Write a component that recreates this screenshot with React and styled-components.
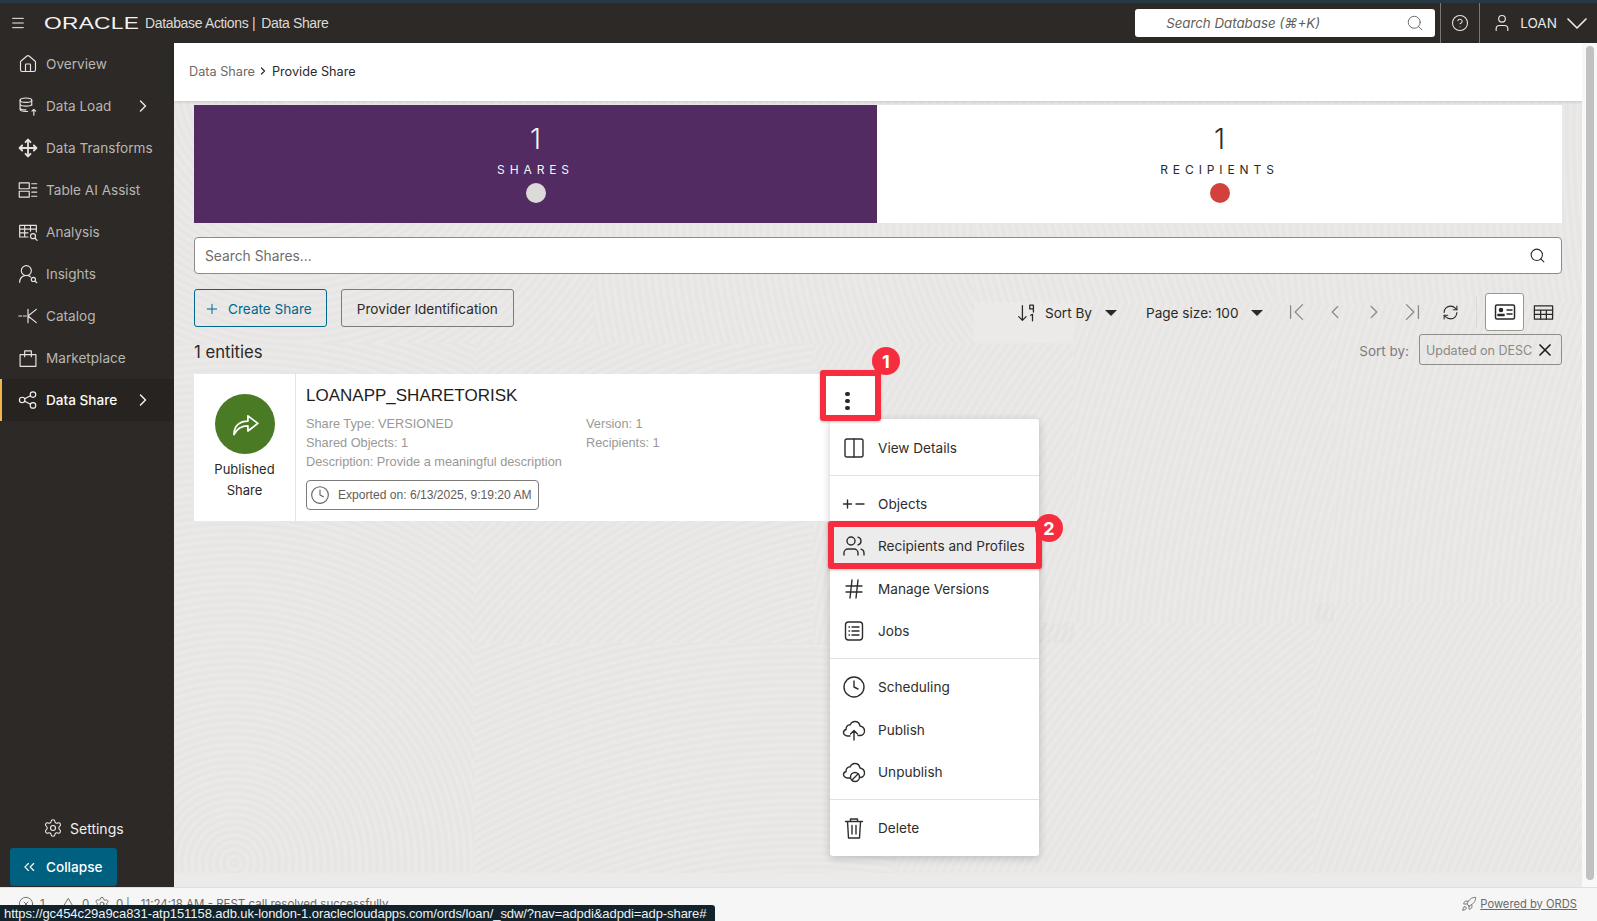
import React from "react";
import styled, {createGlobalStyle} from "styled-components";
import {
    ChevronLeft, ChevronRight, CircleHelp, CircleX, Clock, Columns2, Hash, Home,
    Menu as MenuIcon, Move, Plus, RefreshCw, Rocket, Search, Settings, User, Users, X
} from "lucide-react";

const GlobalStyle = createGlobalStyle`
  html, body {
    margin: 0;
    padding: 0;
    height: 100%;
    overflow: hidden;
    background: #ebeae8;
    font-family: Inter, "Liberation Sans", sans-serif;
  }

  * {
    box-sizing: border-box;
  }
`

// swirl patches of the page background: centre of the rings, then the patch rectangle
const swirls = [
    [120, 40, 0, 0, 420, 300],
    [520, 180, 420, 0, 380, 300],
    [1000, -40, 800, 0, 300, 260],
    [1290, 90, 1100, 0, 308, 260],
    [60, 520, 0, 300, 300, 530],
    [420, 620, 300, 300, 340, 300],
    [760, 430, 640, 300, 260, 300],
    [330, 780, 300, 600, 420, 230],
    [1010, 420, 900, 260, 260, 320],
    [1340, 420, 1160, 260, 248, 300],
    [960, 720, 720, 580, 420, 250],
    [1320, 760, 1140, 560, 268, 270],
];

const swirlImages = swirls.map(([cx, cy]) =>
    `repeating-radial-gradient(circle at ${cx}px ${cy}px, rgba(0,0,0,0) 0, rgba(0,0,0,.022) 3px, rgba(0,0,0,0) 7px)`
).join(",");

const Page = styled.div`
  position: relative;
  width: 1597px;
  height: 921px;
  display: flex;
  flex-direction: column;
  overflow: hidden;
`

const TopStrip = styled.div`
  height: 3px;
  flex: none;
  background: #263843;
`

const Header = styled.header`
  height: 40px;
  flex: none;
  display: flex;
  align-items: center;
  background: #2c2926;
  color: #dcdad7;
`

const Burger = styled.div`
  width: 44px;
  display: flex;
  justify-content: center;
  padding-right: 8px;
  color: #f0efed;
`

const LogoBox = styled.div`
  width: 101px;
  height: 20px;
  flex: none;
`

const Logo = styled.span`
  display: inline-block;
  font: 16px/20px "Liberation Sans", sans-serif;
  letter-spacing: 0.2px;
  color: #f4f3f1;
  transform: scaleX(1.42);
  transform-origin: left center;
`

const AppTitle = styled.div`
  font: 14px "Liberation Sans", sans-serif;
  letter-spacing: -0.35px;
  display: flex;
  gap: 6px;
`

const HeaderSpacer = styled.div`
  flex: 1;
`

const GlobalSearch = styled.div`
  width: 300px;
  height: 28px;
  background: #fff;
  border-radius: 3px;
  display: flex;
  align-items: center;
  justify-content: space-between;
  padding: 0 11px 0 31px;
  font-size: 13.3px;
  font-style: italic;
  color: #5f5d5a;
`

const HeaderCell = styled.div`
  height: 40px;
  margin-left: ${p => p.$ml || 0}px;
  padding: ${p => p.$pad};
  border-left: 1px solid #7b7773;
  display: flex;
  align-items: center;
  gap: 8px;
  font-size: 13.6px;
  color: #e9e7e4;
`

const Body = styled.div`
  flex: 1;
  display: flex;
  min-height: 0;
`

const Sidebar = styled.nav`
  width: 174px;
  flex: none;
  display: flex;
  flex-direction: column;
  background: #2c2926;
  padding-bottom: 1px;
`

const NavItem = styled.div`
  height: 42px;
  flex: none;
  display: flex;
  align-items: center;
  gap: 8px;
  padding: 0 0 1px 16px;
  font-size: 13.6px;
  font-weight: ${p => p.$active ? 500 : 400};
  color: ${p => p.$active ? "#fbfaf9" : "#b8b6b3"};
  background: ${p => p.$active ? "#262320" : "transparent"};
  border-left: 2px solid ${p => p.$active ? "#efb54a" : "transparent"};

  svg {
    color: ${p => p.$active ? "#f2f1ef" : "#e6e4e1"};
    flex: none;
  }
`

const NavLabel = styled.span`
  flex: 1;
`

const NavChevron = styled.span`
  width: 20px;
  margin-right: 21px;
  display: flex;
  justify-content: center;
`

const SettingsRow = styled.div`
  margin-top: auto;
  height: 38px;
  display: flex;
  align-items: center;
  gap: 7px;
  padding: 0 0 2px 43px;
  font-size: 14px;
  color: #f0efed;
`

const CollapseButton = styled.div`
  width: 107px;
  height: 38px;
  margin-left: 10px;
  border-radius: 3px;
  background: #00607f;
  color: #fff;
  font-size: 13.6px;
  font-weight: 500;
  display: flex;
  align-items: center;
  gap: 10px;
  padding: 0 0 1px 12px;
`

const Main = styled.main`
  flex: 1;
  min-width: 0;
  display: flex;
  flex-direction: column;
  background-color: #ebeae8;
  background-image: ${swirlImages};
  background-repeat: no-repeat;
  background-size: ${swirls.map(s => `${s[4]}px ${s[5]}px`).join(",")};
  background-position: ${swirls.map(s => `${s[2]}px ${s[3]}px`).join(",")};
`

const Breadcrumb = styled.div`
  height: 58px;
  flex: none;
  display: flex;
  align-items: center;
  gap: 2.5px;
  padding: 0 0 2px 15px;
  background: #fff;
  box-shadow: 0 1px 3px rgba(0, 0, 0, .14);
  font-size: 12.7px;
  color: #2b2927;
`

const CrumbLink = styled.span`
  color: #6c6a67;
`

const Content = styled.div`
  flex: 1;
  padding: 4px 20px 0 20px;
`

const Stats = styled.section`
  display: flex;
  height: 118px;
`

const StatTile = styled.div`
  flex: ${p => p.$grow};
  display: flex;
  flex-direction: column;
  align-items: center;
  padding-top: 17px;
  background: ${p => p.$active ? "#512b62" : "#fff"};
  color: ${p => p.$active ? "#f6f4f7" : "#2b2927"};
`

const StatValue = styled.div`
  font-size: 28px;
  line-height: 34px;
  font-weight: 300;
`

const StatLabel = styled.div`
  margin-top: 6px;
  font-size: 12px;
  line-height: 15px;
  letter-spacing: 4.9px;
`

const StatDot = styled.div`
  width: 20px;
  height: 20px;
  margin-top: 6px;
  border-radius: 50%;
  background: ${p => p.$color};
`

const SearchBar = styled.div`
  height: 37px;
  margin-top: 14px;
  background: #fff;
  border: 1px solid #8d8b88;
  border-radius: 4px;
  display: flex;
  align-items: center;
  justify-content: space-between;
  padding: 0 15px 0 10px;
  font-size: 13.8px;
  color: #6f6d6a;
`

const Toolbar = styled.div`
  height: 42px;
  margin-top: 15px;
  display: flex;
  justify-content: space-between;
`

const ButtonGroup = styled.div`
  display: flex;
  gap: 14px;
`

const Button = styled.div`
  height: 38px;
  padding: ${p => p.$primary ? "1px 14px 0 9px" : "1px 15px 0"};
  display: flex;
  align-items: center;
  gap: 8px;
  border: 1px solid ${p => p.$primary ? "#00688c" : "#7d7b78"};
  border-radius: 3px;
  font-size: 13.6px;
  color: ${p => p.$primary ? "#00688c" : "#2b2927"};
`

const Pager = styled.div`
  display: flex;
  align-items: center;
  height: 38px;
  margin-top: 4px;
  font-size: 13.6px;
  color: #2b2927;
`

const Dropdown = styled.div`
  display: flex;
  align-items: center;
  padding-top: 1px;
  gap: ${p => p.$gap}px;
  margin-right: ${p => p.$mr}px;
`

const Caret = styled.span`
  width: 0;
  height: 0;
  margin-left: ${p => p.$ml}px;
  border-left: 6px solid transparent;
  border-right: 6px solid transparent;
  border-top: 6px solid #2b2927;
`

const PagerButton = styled.div`
  width: ${p => p.$w || 38.5}px;
  height: 38px;
  display: flex;
  align-items: center;
  justify-content: center;
  color: ${p => p.$dim ? "#8b8986" : "#2b2927"};
  background: ${p => p.$selected ? "#fff" : "transparent"};
  border: ${p => p.$selected ? "1px solid #9a9895" : "none"};
  border-radius: 3px;
`

const PagerDivider = styled.div`
  width: 1px;
  height: 32px;
  margin: 0 8px 0 6px;
  background: #dcdad7;
`

const ResultRow = styled.div`
  height: 31px;
  margin-top: 3px;
  display: flex;
  align-items: center;
  justify-content: space-between;
`

const Entities = styled.div`
  padding-top: 4px;
  font-size: 16.7px;
  color: #2b2927;
`

const SortInfo = styled.div`
  display: flex;
  align-items: center;
  gap: 10px;
  font-size: 13.5px;
  color: #7d7b78;
`

const SortLabel = styled.span`
  padding-top: 3px;
`

const SortChip = styled.div`
  width: 143px;
  height: 31px;
  display: flex;
  align-items: center;
  justify-content: space-between;
  padding: 1px 6px 0;
  border: 1px solid #8f8d8a;
  border-radius: 3px;
  font-size: 12.5px;
  color: #8a8886;

  svg {
    color: #1f1d1b;
    flex: none;
  }
`

const ShareCard = styled.article`
  width: 681px;
  height: 147px;
  margin-top: 9px;
  display: flex;
  background: #fff;
`

const CardStatus = styled.div`
  width: 102px;
  flex: none;
  padding-top: 20px;
  display: flex;
  flex-direction: column;
  align-items: center;
  border-right: 1px solid #e6e4e2;
  font-size: 13px;
  line-height: 21px;
  color: #2b2927;
  text-align: center;
`

const StatusCircle = styled.div`
  width: 60px;
  height: 60px;
  margin-bottom: 5px;
  border-radius: 50%;
  background: #4a7a24;
  color: #fff;
  display: flex;
  align-items: center;
  justify-content: center;
`

const CardBody = styled.div`
  flex: 1;
  padding: 11px 0 0 10px;
  font-family: "Liberation Sans", sans-serif;
`

const CardTitle = styled.h2`
  margin: 0;
  font-size: 17px;
  font-weight: 400;
  line-height: 22px;
  color: #1f1d1b;
`

const MetaGrid = styled.div`
  margin-top: 7px;
  display: grid;
  grid-template-columns: 280px 1fr;
  font-size: 12.75px;
  line-height: 19px;
  color: #9a9895;
`

const MetaWide = styled.div`
  grid-column: 1 / 3;
`

const ExportChip = styled.div`
  width: 233px;
  height: 30px;
  margin-top: 9px;
  display: flex;
  align-items: center;
  gap: 8px;
  padding-left: 3px;
  border: 1px solid #7d7b78;
  border-radius: 4px;
  font-size: 12.1px;
  white-space: nowrap;
  color: #5f5d5a;
`

const Kebab = styled.div`
  width: 55px;
  flex: none;
  padding-top: 18px;
  display: flex;
  flex-direction: column;
  align-items: center;
  gap: 2.4px;

  span {
    width: 4.4px;
    height: 4.4px;
    border-radius: 50%;
    background: #2b2927;
  }
`

const Scrollbar = styled.div`
  width: 15px;
  flex: none;
  padding: 3px 3px 7px 4px;
  background: #f8f8f8;
`

const ScrollThumb = styled.div`
  height: 100%;
  width: 8px;
  border-radius: 4px;
  background: #c1c1c1;
`

const Footer = styled.footer`
  height: 34px;
  flex: none;
  display: flex;
  align-items: center;
  justify-content: space-between;
  padding: 0 20px 2px 18px;
  background: #f6f6f6;
  border-top: 1px solid #e0dfdd;
  font-size: 11.5px;
  color: #6b6967;
`

const FooterStatus = styled.div`
  display: flex;
  align-items: center;
`

const StatusCount = styled.div`
  width: ${p => p.$w}px;
  display: flex;
  align-items: center;
  gap: 6px;
`

const StatusMessage = styled.span`
  margin-left: 11px;
`

const PoweredBy = styled.div`
  display: flex;
  align-items: center;
  gap: 3px;
  font-size: 11.2px;
  text-decoration: underline;
`

const PopupMenu = styled.div`
  position: absolute;
  top: 419px;
  left: 830px;
  width: 209px;
  padding-bottom: 1px;
  background: #fff;
  border-radius: 3px;
  box-shadow: 0 2px 8px rgba(0, 0, 0, .2);
`

const MenuGroup = styled.div`
  padding: ${p => p.$first ? "8px" : "6.5px"} 0 6px;
  border-top: ${p => p.$first ? "none" : "1px solid #e3e2e0"};
`

const MenuItem = styled.div`
  height: 42.4px;
  display: flex;
  align-items: center;
  gap: 12px;
  padding-left: 12px;
  font-size: 13.6px;
  color: #2f2d2b;
  background: ${p => p.$hover ? "#ececec" : "transparent"};

  svg {
    flex: none;
  }
`

const Callout = styled.div`
  position: absolute;
  top: ${p => p.$top}px;
  left: ${p => p.$left}px;
  width: ${p => p.$w}px;
  height: ${p => p.$h}px;
  border: 6px solid #f52d3e;
  border-radius: 3px;
  box-shadow: 0 1px 3px rgba(0, 0, 0, .25);
`

const CalloutBadge = styled.div`
  position: absolute;
  top: ${p => p.$top}px;
  left: ${p => p.$left}px;
  width: 28px;
  height: 28px;
  border-radius: 50%;
  background: #f52d3e;
  color: #fff;
  font-size: 18px;
  font-weight: 700;
  display: flex;
  align-items: center;
  justify-content: center;
`

const UrlTip = styled.div`
  position: absolute;
  left: 0;
  bottom: 0;
  height: 16px;
  width: 715px;
  padding-left: 4px;
  background: #13232c;
  border-top-right-radius: 3px;
  color: #eef2f4;
  font: 13px/17px "Liberation Sans", sans-serif;
  letter-spacing: -0.07px;
  white-space: nowrap;
`

// drawn by hand, the icon packages have nothing close to these
const Svg = ({size = 20, sw = 1.4, children}) => (
    <svg width={size} height={size} viewBox="0 0 24 24" fill="none" stroke="currentColor"
         strokeWidth={sw} strokeLinecap="round" strokeLinejoin="round">
        {children}
    </svg>
);

const DataLoadIcon = () => (
    <Svg>
        <ellipse cx="9.5" cy="5" rx="7" ry="2.6"/>
        <path d="M2.5 5v11c0 1.4 3 2.6 7 2.6h2M2.5 9.5c0 1.4 3 2.6 7 2.6s7-1.2 7-2.6M2.5 14c0 1.4 3 2.6 7 2.6M16.5 5v6"/>
        <path d="M19 23v-7M16.8 18.2 19 16l2.2 2.2"/>
    </Svg>
);

const TableAssistIcon = () => (
    <Svg>
        <rect x="1.5" y="3.5" width="12" height="7"/>
        <rect x="1.5" y="13.5" width="12" height="7"/>
        <path d="M16.5 4.5h6M16.5 9.5h6M16.5 14.5h6M16.5 19.5h6"/>
    </Svg>
);

const AnalysisIcon = () => (
    <Svg>
        <path d="M12 18H2V4h20v8M2 8.5h20M2 13h10M8 4v14M15 4v7"/>
        <circle cx="18" cy="17" r="3"/>
        <path d="m20.5 19.5 2.5 2.5"/>
    </Svg>
);

const InsightsIcon = () => (
    <Svg>
        <circle cx="10" cy="8" r="6"/>
        <path d="M2 22c0-4 2.5-7 6-8M12.5 14c1 .3 1.8.8 2.5 1.5"/>
        <circle cx="18.5" cy="18.5" r="2.5"/>
        <path d="m20.5 20.5 2 2"/>
    </Svg>
);

const CatalogIcon = () => (
    <Svg>
        <path d="M1 12h3.5M6.5 12h3.5M12 4v16M22 4l-10 8 10 8"/>
    </Svg>
);

const MarketIcon = () => (
    <Svg>
        <rect x="2.5" y="8" width="19" height="14"/>
        <path d="M8 8V3.5h8V8M8 8v2.5M16 8v2.5"/>
    </Svg>
);

const ShareNodesIcon = () => (
    <Svg>
        <circle cx="5" cy="12" r="3.3"/>
        <circle cx="18" cy="5.5" r="3.3"/>
        <circle cx="18" cy="18.5" r="3.3"/>
        <path d="m8 10.5 7-3.5M8 13.5l7 3.5"/>
    </Svg>
);

const CollapseChevrons = () => (
    <Svg size={14} sw={2}>
        <path d="M11 6l-6 6 6 6M20 6l-6 6 6 6"/>
    </Svg>
);

const WideChevron = () => (
    <Svg size={24} sw={1.7}>
        <path d="M3 8l9 9 9-9"/>
    </Svg>
);

const SortIcon = () => (
    <Svg size={22}>
        <path d="M7 4v16M3 16l4 4 4-4"/>
        <rect x="15" y="3.5" width="4" height="4"/>
        <path d="M19 7.5V11M16 14.5l2-1v7"/>
    </Svg>
);

const FirstIcon = () => (
    <Svg size={22}>
        <path d="M5 5v14M18 4l-8 8 8 8"/>
    </Svg>
);

const LastIcon = () => (
    <Svg size={22}>
        <path d="M19 5v14M6 4l8 8-8 8"/>
    </Svg>
);

const CardViewIcon = () => (
    <Svg size={24} sw={1.5}>
        <rect x="2.5" y="5" width="19" height="14" rx="1.5"/>
        <circle cx="8" cy="10" r="1.5" fill="currentColor"/>
        <path d="M5 15.5h6v-1H5zM14 10h5M14 14h5" fill="currentColor"/>
    </Svg>
);

const TableViewIcon = () => (
    <Svg size={23} sw={1.3}>
        <rect x="2.5" y="5" width="19" height="14"/>
        <path d="M2.5 9.5h19M2.5 14h19M9 9.5V19M15 9.5V19"/>
    </Svg>
);

const ReplyIcon = () => (
    <Svg size={28} sw={1.5}>
        <path d="M2.5 21C2.5 13 8 9.5 14.5 9.5V5L23 11.5 14.5 18v-4.5c-6 0-9.5 2.5-12 7.5Z"/>
    </Svg>
);

const PlusMinusIcon = () => (
    <Svg size={24}>
        <path d="M1.5 12h8M5.5 8v8M14 12h8"/>
    </Svg>
);

const JobsIcon = () => (
    <Svg size={24}>
        <rect x="3.5" y="3" width="17" height="18" rx="3"/>
        <path d="M10 8h7M10 12h7M10 16h7M7 8h.5M7 12h.5M7 16h.5"/>
    </Svg>
);

const CloudArrowIcon = () => (
    <Svg size={24}>
        <path d="M8 18H5.5C3 18 1.5 16 1.5 14.5S2.5 12 4 11.5C4 8 6.5 6.5 8 7c1-2 3-3.5 5-3.5 2.5 0 4.5 2 5 4.5 2.5.5 4.5 2.5 4.5 5s-2 4.5-4.5 4.5h-2"/>
        <path d="M12 22v-9M8.5 16l3.5-3.5 3.5 3.5"/>
    </Svg>
);

const CloudBanIcon = () => (
    <Svg size={24}>
        <path d="M8 18H5.5C3 18 1.5 16 1.5 14.5S2.5 12 4 11.5C4 8 6.5 6.5 8 7c1-2 3-3.5 5-3.5 2.5 0 4.5 2 5 4.5 2.5.5 4.5 2.5 4.5 5s-2 4.5-4.5 4.5"/>
        <circle cx="13" cy="17" r="4.5"/>
        <path d="m10 20 6-6"/>
    </Svg>
);

const TrashIcon = () => (
    <Svg size={24}>
        <path d="M3.5 5.5h17M8.5 5.5V3h7v2.5M5.5 5.5 6.5 22h11l1-16.5M10 9.5V18M14 9.5V18"/>
    </Svg>
);

const TriangleSmall = () => (
    <Svg size={16}>
        <path d="M12 4 2.5 20h19Z"/>
    </Svg>
);

const navItems = [
    {label: "Overview", icon: <Home size={20} strokeWidth={1.4}/>},
    {label: "Data Load", icon: <DataLoadIcon/>, more: true},
    {label: "Data Transforms", icon: <Move size={20} strokeWidth={2.2}/>},
    {label: "Table AI Assist", icon: <TableAssistIcon/>},
    {label: "Analysis", icon: <AnalysisIcon/>},
    {label: "Insights", icon: <InsightsIcon/>},
    {label: "Catalog", icon: <CatalogIcon/>},
    {label: "Marketplace", icon: <MarketIcon/>},
    {label: "Data Share", icon: <ShareNodesIcon/>, more: true, active: true},
];

const menuGroups = [
    [{label: "View Details", icon: <Columns2 size={24} strokeWidth={1.4}/>}],
    [
        {label: "Objects", icon: <PlusMinusIcon/>},
        {label: "Recipients and Profiles", icon: <Users size={24} strokeWidth={1.4}/>, hover: true},
        {label: "Manage Versions", icon: <Hash size={24} strokeWidth={1.4}/>},
        {label: "Jobs", icon: <JobsIcon/>},
    ],
    [
        {label: "Scheduling", icon: <Clock size={24} strokeWidth={1.4}/>},
        {label: "Publish", icon: <CloudArrowIcon/>},
        {label: "Unpublish", icon: <CloudBanIcon/>},
    ],
    [{label: "Delete", icon: <TrashIcon/>}],
];

export default function App() {
    return (
        <Page>
            <GlobalStyle/>
            <TopStrip/>
            <Header>
                <Burger><MenuIcon size={16} strokeWidth={1.5}/></Burger>
                <LogoBox><Logo>ORACLE</Logo></LogoBox>
                <AppTitle><span>Database Actions |</span><span>Data Share</span></AppTitle>
                <HeaderSpacer/>
                <GlobalSearch>
                    Search Database (⌘+K)
                    <Search size={18} strokeWidth={1.2}/>
                </GlobalSearch>
                <HeaderCell $ml={5} $pad="0 10px"><CircleHelp size={18} strokeWidth={1.4}/></HeaderCell>
                <HeaderCell $pad="0 8px 0 12px">
                    <User size={20} strokeWidth={1.4}/>
                    LOAN
                    <WideChevron/>
                </HeaderCell>
            </Header>
            <Body>
                <Sidebar>
                    {navItems.map(item => (
                        <NavItem key={item.label} $active={item.active}>
                            {item.icon}
                            <NavLabel>{item.label}</NavLabel>
                            {item.more && <NavChevron><ChevronRight size={20} strokeWidth={1.8}/></NavChevron>}
                        </NavItem>
                    ))}
                    <SettingsRow><Settings size={20} strokeWidth={1.3}/>Settings</SettingsRow>
                    <CollapseButton>
                        <CollapseChevrons/>
                        Collapse
                    </CollapseButton>
                </Sidebar>
                <Main>
                    <Breadcrumb>
                        <CrumbLink>Data Share</CrumbLink>
                        <ChevronRight size={12} strokeWidth={2.4}/>
                        <span>Provide Share</span>
                    </Breadcrumb>
                    <Content>
                        <Stats>
                            <StatTile $active $grow="683">
                                <StatValue>1</StatValue>
                                <StatLabel>SHARES</StatLabel>
                                <StatDot $color="#dcdad8"/>
                            </StatTile>
                            <StatTile $grow="685">
                                <StatValue>1</StatValue>
                                <StatLabel>RECIPIENTS</StatLabel>
                                <StatDot $color="#d2413c"/>
                            </StatTile>
                        </Stats>
                        <SearchBar>
                            Search Shares...
                            <Search size={17} strokeWidth={1.5} color="#2b2927"/>
                        </SearchBar>
                        <Toolbar>
                            <ButtonGroup>
                                <Button $primary><Plus size={16} strokeWidth={1.5}/>Create Share</Button>
                                <Button>Provider Identification</Button>
                            </ButtonGroup>
                            <Pager>
                                <Dropdown $gap={7} $mr={29}>
                                    <SortIcon/>Sort By<Caret $ml={6}/>
                                </Dropdown>
                                <Dropdown $gap={0} $mr={15}>
                                    Page size: 100<Caret $ml={12}/>
                                </Dropdown>
                                <PagerButton $dim><FirstIcon/></PagerButton>
                                <PagerButton $dim><ChevronLeft size={22} strokeWidth={1.3}/></PagerButton>
                                <PagerButton $dim><ChevronRight size={22} strokeWidth={1.3}/></PagerButton>
                                <PagerButton $dim><LastIcon/></PagerButton>
                                <PagerButton><RefreshCw size={17} strokeWidth={1.5}/></PagerButton>
                                <PagerDivider/>
                                <PagerButton $selected $w={39}><CardViewIcon/></PagerButton>
                                <PagerButton $w={38}><TableViewIcon/></PagerButton>
                            </Pager>
                        </Toolbar>
                        <ResultRow>
                            <Entities>1 entities</Entities>
                            <SortInfo>
                                <SortLabel>Sort by:</SortLabel>
                                <SortChip>Updated on DESC<X size={20} strokeWidth={2}/></SortChip>
                            </SortInfo>
                        </ResultRow>
                        <ShareCard>
                            <CardStatus>
                                <StatusCircle><ReplyIcon/></StatusCircle>
                                Published<br/>Share
                            </CardStatus>
                            <CardBody>
                                <CardTitle>LOANAPP_SHARETORISK</CardTitle>
                                <MetaGrid>
                                    <div>Share Type: VERSIONED</div>
                                    <div>Version: 1</div>
                                    <div>Shared Objects: 1</div>
                                    <div>Recipients: 1</div>
                                    <MetaWide>Description: Provide a meaningful description</MetaWide>
                                </MetaGrid>
                                <ExportChip>
                                    <Clock size={20} strokeWidth={1.3}/>
                                    Exported on: 6/13/2025, 9:19:20 AM
                                </ExportChip>
                            </CardBody>
                            <Kebab><span/><span/><span/></Kebab>
                        </ShareCard>
                    </Content>
                </Main>
                <Scrollbar><ScrollThumb/></Scrollbar>
            </Body>
            <Footer>
                <FooterStatus>
                    <StatusCount $w={42}><CircleX size={16} strokeWidth={1.4}/>1</StatusCount>
                    <StatusCount $w={34}><TriangleSmall/>0</StatusCount>
                    <StatusCount $w={32}><Settings size={16} strokeWidth={1.4}/>0</StatusCount>
                    |
                    <StatusMessage>11:24:18 AM - REST call resolved successfully</StatusMessage>
                </FooterStatus>
                <PoweredBy><Rocket size={16} strokeWidth={1.3}/>Powered by ORDS</PoweredBy>
            </Footer>
            <PopupMenu>
                {menuGroups.map((group, i) => (
                    <MenuGroup key={i} $first={i === 0}>
                        {group.map(item => (
                            <MenuItem key={item.label} $hover={item.hover}>{item.icon}{item.label}</MenuItem>
                        ))}
                    </MenuGroup>
                ))}
            </PopupMenu>
            <Callout $top={370} $left={820} $w={61} $h={51}/>
            <CalloutBadge $top={347} $left={872}>1</CalloutBadge>
            <Callout $top={521} $left={828} $w={214} $h={48}/>
            <CalloutBadge $top={514} $left={1035}>2</CalloutBadge>
            <UrlTip>https://gc454c29a9ca831-atp151158.adb.uk-london-1.oraclecloudapps.com/ords/loan/_sdw/?nav=adpdi&adpdi=adp-share#</UrlTip>
        </Page>
    );
}
